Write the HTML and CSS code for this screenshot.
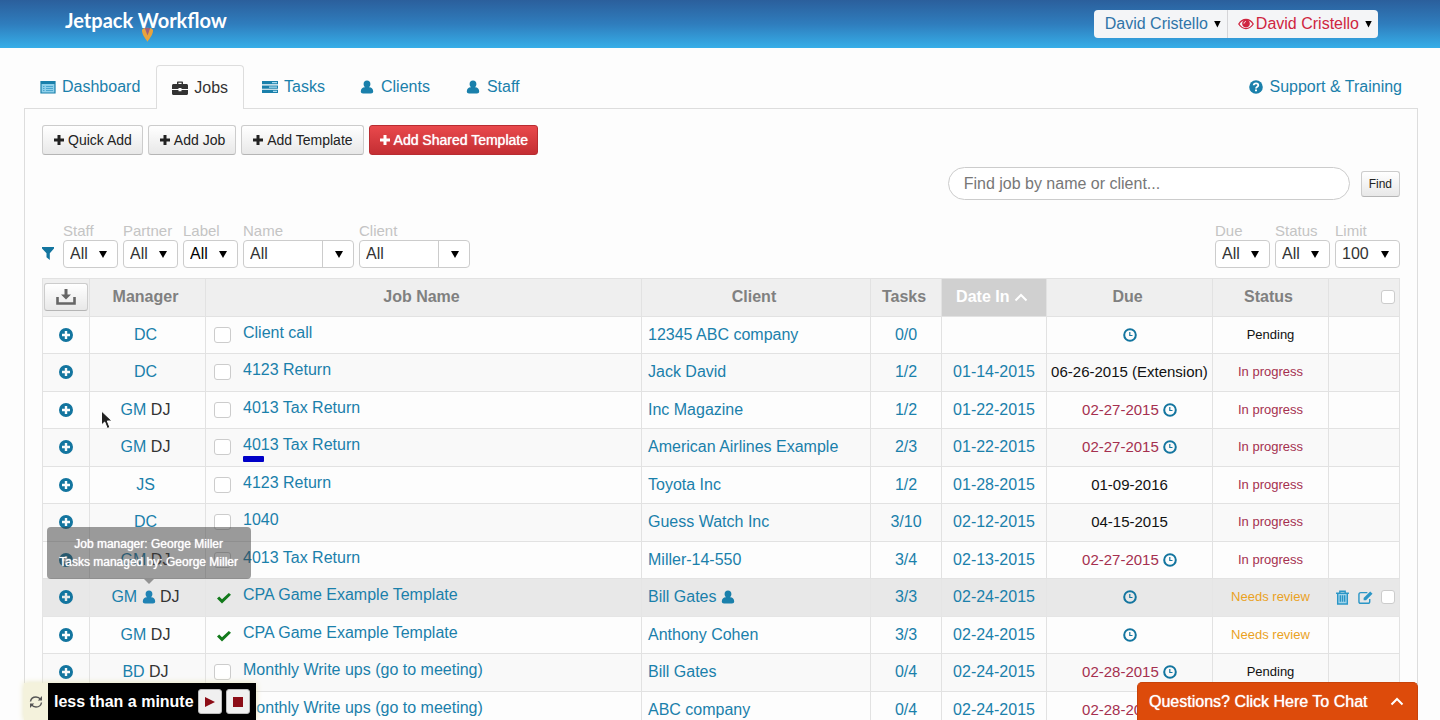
FILE: index.html
```html
<!DOCTYPE html>
<html lang="en">
<head>
<meta charset="utf-8">
<title>Jetpack Workflow – Jobs</title>
<link rel="stylesheet" href="styles.css">
</head>
<body>
<svg class="sprite" aria-hidden="true">
  <symbol id="i-plus" viewBox="0 0 12 12"><path d="M4.500 1h3v3.500H11v3H7.500V11h-3V7.500H1v-3h3.500z"/></symbol>
  <symbol id="i-add" viewBox="0 0 14 14"><path fill-rule="evenodd" d="M7 0a7 7 0 1 0 0 14A7 7 0 0 0 7 0zM5.800 3h2.400v2.800H11v2.400H8.200V11H5.800V8.200H3V5.800h2.800z"/></symbol>
  <symbol id="i-clock" viewBox="0 0 14 14"><circle cx="7" cy="7" r="5.800" fill="none" stroke="currentColor" stroke-width="2"/><path d="M6.800 4v3.500h2.700" fill="none" stroke="currentColor" stroke-width="1.200"/></symbol>
  <symbol id="i-user" viewBox="0 0 14 14"><path d="M7 .5C4.800.5 3.600 2 3.600 4c0 1.400.5 2.500 1.300 3.200C2.300 7.200.8 8.800.8 11.500c0 1.300.9 2 2.200 2h8c1.300 0 2.200-.7 2.200-2 0-2.700-1.500-4.300-4.100-4.300.8-.7 1.300-1.800 1.300-3.200C10.400 2 9.200.5 7 .5z"/></symbol>
  <symbol id="i-check" viewBox="0 0 14 12"><path d="M0 6.500 2.200 4.500 5 7.300 11.800 1 14 2.800 5 11.500z"/></symbol>
</svg>
<div class="app">
  <header class="topbar">
    <a class="brand" href="#">Jetpack Workflow
      <svg class="flame" viewBox="0 0 12 16"><path fill="#e9a33c" d="M0 3c1-3 11-3 12 0 .2 5-3 8-6 13C3 11-.2 8 0 3z"/><path fill="#a0607a" d="M3 1h6L6 9z"/></svg>
    </a>
    <div class="accounts">
      <button class="account" type="button">David Cristello <span class="caret"></span></button>
      <button class="account viewing" type="button"><svg class="eye" viewBox="0 0 16 12"><path fill="none" stroke="currentColor" stroke-width="1.300" d="M.8 6C2.500 3.200 5 1.500 8 1.500S13.500 3.200 15.200 6C13.500 8.800 11 10.500 8 10.500S2.500 8.800.8 6z"/><circle cx="8" cy="5.500" r="3.800"/><path fill="none" stroke="#fff" stroke-width=".9" d="M6 5.600c0-1.200.8-2 2-2"/></svg>David Cristello <span class="caret"></span></button>
    </div>
  </header>

  <main class="page">
    <nav class="tabs">
      <a class="tab" href="#"><svg class="icon16" viewBox="0 0 16 14"><path fill="#8fd0ea" d="M1 2h14v11H1z"/><path fill="none" stroke="currentColor" stroke-width="1.200" d="M1 1.500h14v11.500H1z"/><path fill="currentColor" d="M1 1h14v3H1z"/><path stroke="#4ba6cf" stroke-width="1" d="M3 6.500h1.500M3 8.500h1.500M3 10.500h1.500M6 6.500h7M6 8.500h7M6 10.500h7"/></svg>Dashboard</a>
      <a class="tab active" href="#"><svg class="icon16" viewBox="0 0 16 14"><path fill-rule="evenodd" d="M5 3V1.500C5 .9 5.400.5 6 .5h4c.6 0 1 .4 1 1V3h3.500c.9 0 1.500.6 1.500 1.500V8H9.500V7h-3v1H0V4.500C0 3.600.6 3 1.500 3zm1.400 0h3.200V1.800H6.400zM0 9h6.500v1.200h3V9H16v3.500c0 .9-.6 1.500-1.500 1.500h-13C.6 14 0 13.400 0 12.500z"/></svg>Jobs</a>
      <a class="tab" href="#"><svg class="icon16" viewBox="0 0 16 14"><path d="M0 1h16v3.300H0zM0 5.400h16v3.300H0zM0 9.800h16V13H0z"/><path fill="#a5daf0" d="M10 2h5v1.300h-5zM7 6.400h8v1.300H7zM11 10.800h4V12h-4z"/></svg>Tasks</a>
      <a class="tab person" href="#"><svg class="icon14"><use href="#i-user"/></svg>Clients</a>
      <a class="tab person" href="#"><svg class="icon14"><use href="#i-user"/></svg>Staff</a>
      <a class="support" href="#"><svg class="icon14" viewBox="0 0 14 14"><circle cx="7" cy="7" r="6.800"/><path fill="none" stroke="#fff" stroke-width="1.800" d="M4.700 5.300C4.800 3.900 5.800 3.300 7 3.300s2.300.7 2.300 1.900C9.300 6.700 7 6.700 7 8.600"/><path fill="#fff" d="M6 9.500h2v1.800H6z"/></svg>Support &amp; Training</a>
    </nav>

    <section class="panel">
      <div class="actions">
        <button class="btn" type="button"><svg class="plus"><use href="#i-plus"/></svg>Quick Add</button>
        <button class="btn" type="button"><svg class="plus"><use href="#i-plus"/></svg>Add Job</button>
        <button class="btn" type="button"><svg class="plus"><use href="#i-plus"/></svg>Add Template</button>
        <button class="btn danger" type="button"><svg class="plus"><use href="#i-plus"/></svg>Add Shared Template</button>
      </div>

      <form class="search">
        <input class="search-box" type="search" placeholder="Find job by name or client..." aria-label="Find job by name or client">
        <button class="btn small" type="button">Find</button>
      </form>

      <div class="filters">
        <svg class="funnel" viewBox="0 0 12 13"><path d="M0 0h12v1.500L7.800 6.200V13L4.500 10.300V6.200L0 1.500z"/></svg>
        <div class="filter"><label for="f-staff">Staff</label><div class="pick"><select id="f-staff"><option>All</option></select></div></div>
        <div class="filter"><label for="f-partner">Partner</label><div class="pick"><select id="f-partner"><option>All</option></select></div></div>
        <div class="filter dark"><label for="f-label">Label</label><div class="pick"><select id="f-label"><option>All</option></select></div></div>
        <div class="filter wide"><label for="f-name">Name</label><div class="pick"><select id="f-name"><option>All</option></select></div></div>
        <div class="filter wide"><label for="f-client">Client</label><div class="pick"><select id="f-client"><option>All</option></select></div></div>
        <div class="filter push"><label for="f-due">Due</label><div class="pick"><select id="f-due"><option>All</option></select></div></div>
        <div class="filter"><label for="f-status">Status</label><div class="pick"><select id="f-status"><option>All</option></select></div></div>
        <div class="filter limit"><label for="f-limit">Limit</label><div class="pick"><select id="f-limit"><option>100</option></select></div></div>
      </div>

      <table class="jobs">
        <colgroup><col class="c-add"><col class="c-manager"><col><col class="c-client"><col class="c-tasks"><col class="c-in"><col class="c-due"><col class="c-status"><col class="c-tools"></colgroup>
        <thead>
          <tr>
            <th><button class="btn export" type="button" aria-label="Export"><svg viewBox="0 0 20 16"><path d="M8.500 0h3v5.500H15L10 10.500 5 5.500h3.500z"/><path fill="none" stroke="currentColor" stroke-width="2.600" d="M1.500 8v6.500h17V8"/></svg></button></th>
            <th>Manager</th><th>Job Name</th><th>Client</th><th>Tasks</th>
            <th class="sorted">Date In <svg class="chevron" viewBox="0 0 14 9"><path d="M1.500 7.500 7 2l5.500 5.500"/></svg></th>
            <th>Due</th><th>Status</th>
            <th class="tools"><input type="checkbox" aria-label="Select all"></th>
          </tr>
        </thead>
        <tbody>
          <tr><td><svg class="icon14"><use href="#i-add"/></svg></td><td><a href="#">DC</a></td><td class="name"><div class="job"><input type="checkbox" aria-label="Done"><a href="#">Client call</a></div></td><td class="client"><a href="#">12345 ABC company</a></td><td><a href="#">0/0</a></td><td></td><td class="due"><svg class="icon14"><use href="#i-clock"/></svg></td><td class="status">Pending</td><td></td></tr>
          <tr><td><svg class="icon14"><use href="#i-add"/></svg></td><td><a href="#">DC</a></td><td class="name"><div class="job"><input type="checkbox" aria-label="Done"><a href="#">4123 Return</a></div></td><td class="client"><a href="#">Jack David</a></td><td><a href="#">1/2</a></td><td><a href="#">01-14-2015</a></td><td class="due">06-26-2015 (Extension)</td><td class="status progress">In progress</td><td></td></tr>
          <tr><td><svg class="icon14"><use href="#i-add"/></svg></td><td class="has-cursor"><a href="#">GM</a> DJ<svg class="cursor" viewBox="0 0 13 20"><path d="M1.500 1v14l3.200-3 2.600 6.500 2.600-1.100L7.300 11H12z"/></svg></td><td class="name"><div class="job"><input type="checkbox" aria-label="Done"><a href="#">4013 Tax Return</a></div></td><td class="client"><a href="#">Inc Magazine</a></td><td><a href="#">1/2</a></td><td><a href="#">01-22-2015</a></td><td class="due late">02-27-2015 <svg class="icon14"><use href="#i-clock"/></svg></td><td class="status progress">In progress</td><td></td></tr>
          <tr><td><svg class="icon14"><use href="#i-add"/></svg></td><td><a href="#">GM</a> DJ</td><td class="name"><div class="job"><input type="checkbox" aria-label="Done"><div><a href="#">4013 Tax Return</a><span class="tag"></span></div></div></td><td class="client"><a href="#">American Airlines Example</a></td><td><a href="#">2/3</a></td><td><a href="#">01-22-2015</a></td><td class="due late">02-27-2015 <svg class="icon14"><use href="#i-clock"/></svg></td><td class="status progress">In progress</td><td></td></tr>
          <tr><td><svg class="icon14"><use href="#i-add"/></svg></td><td><a href="#">JS</a></td><td class="name"><div class="job"><input type="checkbox" aria-label="Done"><a href="#">4123 Return</a></div></td><td class="client"><a href="#">Toyota Inc</a></td><td><a href="#">1/2</a></td><td><a href="#">01-28-2015</a></td><td class="due">01-09-2016</td><td class="status progress">In progress</td><td></td></tr>
          <tr><td><svg class="icon14"><use href="#i-add"/></svg></td><td><a href="#">DC</a></td><td class="name"><div class="job"><input type="checkbox" aria-label="Done"><a href="#">1040</a></div></td><td class="client"><a href="#">Guess Watch Inc</a></td><td><a href="#">3/10</a></td><td><a href="#">02-12-2015</a></td><td class="due">04-15-2015</td><td class="status progress">In progress</td><td></td></tr>
          <tr><td><svg class="icon14"><use href="#i-add"/></svg></td><td><a href="#">GM</a> DJ</td><td class="name"><div class="job"><input type="checkbox" aria-label="Done"><a href="#">4013 Tax Return</a></div></td><td class="client"><a href="#">Miller-14-550</a></td><td><a href="#">3/4</a></td><td><a href="#">02-13-2015</a></td><td class="due late">02-27-2015 <svg class="icon14"><use href="#i-clock"/></svg></td><td class="status progress">In progress</td><td></td></tr>
          <tr class="hover"><td><svg class="icon14"><use href="#i-add"/></svg></td><td><a href="#">GM</a> <span class="tip-anchor"><svg class="icon14"><use href="#i-user"/></svg><span class="tooltip" role="tooltip">Job manager: George Miller<br>Tasks managed by: George Miller</span></span> DJ</td><td class="name"><div class="job"><svg class="done"><use href="#i-check"/></svg><a href="#">CPA Game Example Template</a></div></td><td class="client"><a href="#">Bill Gates <svg class="icon14"><use href="#i-user"/></svg></a></td><td><a href="#">3/3</a></td><td><a href="#">02-24-2015</a></td><td class="due"><svg class="icon14"><use href="#i-clock"/></svg></td><td class="status review">Needs review</td>
            <td class="tools"><div class="toolset">
              <button type="button" aria-label="Delete"><svg viewBox="0 0 14 14"><path fill="#9fd3ea" stroke="currentColor" stroke-width="1.300" d="M2.500 3v10h9V3"/><path fill="none" stroke="currentColor" stroke-width="1.300" d="M1 3h12M4.500 3V1.200h5V3M5 5v6M7 5v6M9 5v6"/></svg></button>
              <button type="button" aria-label="Edit"><svg viewBox="0 0 16 14"><path fill="none" stroke="currentColor" stroke-width="1.500" d="M10 1.800H3C1.800 1.800 1 2.600 1 3.800v7.400c0 1.200.8 2 2 2h7.500c1.200 0 2-.8 2-2V8.500"/><path d="M6 7.500 13 .5l2.500 2.500-7 7H6z"/></svg></button>
              <input type="checkbox" aria-label="Select job"></div></td></tr>
          <tr><td><svg class="icon14"><use href="#i-add"/></svg></td><td><a href="#">GM</a> DJ</td><td class="name"><div class="job"><svg class="done"><use href="#i-check"/></svg><a href="#">CPA Game Example Template</a></div></td><td class="client"><a href="#">Anthony Cohen</a></td><td><a href="#">3/3</a></td><td><a href="#">02-24-2015</a></td><td class="due"><svg class="icon14"><use href="#i-clock"/></svg></td><td class="status review">Needs review</td><td></td></tr>
          <tr><td><svg class="icon14"><use href="#i-add"/></svg></td><td><a href="#">BD</a> DJ</td><td class="name"><div class="job"><input type="checkbox" aria-label="Done"><a href="#">Monthly Write ups (go to meeting)</a></div></td><td class="client"><a href="#">Bill Gates</a></td><td><a href="#">0/4</a></td><td><a href="#">02-24-2015</a></td><td class="due late">02-28-2015 <svg class="icon14"><use href="#i-clock"/></svg></td><td class="status">Pending</td><td></td></tr>
          <tr><td></td><td></td><td class="name"><div class="job"><input type="checkbox" aria-label="Done"><a href="#">Monthly Write ups (go to meeting)</a></div></td><td class="client"><a href="#">ABC company</a></td><td><a href="#">0/4</a></td><td><a href="#">02-24-2015</a></td><td class="due late">02-28-2015 <svg class="icon14"><use href="#i-clock"/></svg></td><td></td><td></td></tr>
        </tbody>
      </table>
    </section>
  </main>

  <div class="recorder">
    <svg class="refresh" viewBox="0 0 14 14"><path fill="none" stroke="currentColor" stroke-width="1.400" d="M1.500 6.500C2 3.500 4.300 2 7 2c2 0 3.500.8 4.600 2.300M12.500 7.500C12 10.500 9.700 12 7 12c-2 0-3.500-.8-4.600-2.300"/><path d="M13 1v4.500H8.800zM1 13V8.500h4.200z"/></svg>
    <div class="recorder-bar">
      <span>less than a minute</span>
      <button type="button" aria-label="Resume"><svg viewBox="0 0 12 12"><path d="M1 1l10 5-10 5z"/></svg></button>
      <button type="button" aria-label="Stop"><svg viewBox="0 0 12 12"><path d="M1 1h10v10H1z"/></svg></button>
    </div>
  </div>
  <button class="chat" type="button">Questions? Click Here To Chat <svg class="chevron" viewBox="0 0 14 9"><path d="M1.500 7.500 7 2l5.500 5.500"/></svg></button>
</div>
</body>
</html>
```
FILE: styles.css
```css
* { box-sizing: border-box; }

body {
  margin: 0;
  background: #fdfdfd;
  color: #333;
  font: 16px/20px "Liberation Sans", Arial, sans-serif;
}

a { color: #1a80ab; text-decoration: none; }
button, input, select { font: inherit; color: inherit; margin: 0; }
button { cursor: pointer; }
svg { fill: currentColor; }

.sprite { position: absolute; width: 0; height: 0; }
.app { height: 100vh; overflow: hidden; }

.icon14 { width: 14px; height: 14px; vertical-align: -2px; }
.icon16 { width: 16px; height: 14px; }
td > .icon14 { color: #13759f; }

/* Top bar */
.topbar {
  display: flex;
  justify-content: space-between;
  align-items: center;
  height: 48px;
  padding: 0 62px 0 65px;
  background: linear-gradient(#2b5f9c, #2f7dbd 50%, #36aee8);
}
.brand {
  position: relative;
  padding-bottom: 8px;
  color: #fff;
  font: 700 20px/24px Lato, sans-serif;
}
.flame { position: absolute; left: 77px; top: 19px; width: 11px; height: 15px; }
.accounts {
  display: flex;
  border-radius: 4px;
  background: #f4f5f7;
  overflow: hidden;
}
.account {
  display: flex;
  align-items: center;
  height: 28px;
  padding: 0 6px 0 11px;
  border: 0;
  background: none;
  color: #2f74a8;
}
.account + .account { padding-left: 10px; border-left: 1px solid #d5d5d8; }
.account.viewing { color: #cf2540; }
.eye { width: 16px; height: 12px; margin-right: 2px; }
.caret {
  width: 7px;
  height: 7px;
  margin-left: 6px;
  background: #000;
  clip-path: polygon(0 0, 100% 0, 50% 100%);
}

/* Tabs */
.page { padding: 17px 22px 0 24px; }
.tabs { display: flex; align-items: flex-end; }
.tab, .support { display: flex; align-items: center; gap: 6px; }
.tab {
  height: 43px;
  padding: 0 15px;
  border: 1px solid transparent;
  border-bottom: 0;
  border-radius: 4px 4px 0 0;
}
.tab + .tab { margin-right: 2px; }
.tab.person { padding: 0 16px; gap: 7px; }
.tab.active {
  z-index: 1;
  margin-bottom: -1px;
  height: 44px;
  border-color: #ddd;
  background: #fdfdfd;
  color: #333;
}
.support { height: 43px; margin-left: auto; margin-right: 16px; }

/* Panel */
.panel {
  padding: 16px 17px 0;
  border: 1px solid #ddd;
}
.actions { display: flex; gap: 5px; }
.btn {
  display: flex;
  align-items: center;
  justify-content: center;
  gap: 3px;
  height: 30px;
  padding: 0 10px;
  border: 1px solid #ccc;
  border-bottom-color: #b5b5b5;
  border-radius: 3px;
  background: linear-gradient(#fff, #e8e8e8);
  color: #222;
  font-size: 14px;
}
.btn.danger {
  padding: 0 9px;
  border-color: #b82c31;
  background: linear-gradient(#e9494c, #c42e33);
  color: #fff;
  text-shadow: 0 0 1px #fff;
}
.plus { width: 12px; height: 12px; }

.search {
  display: flex;
  justify-content: flex-end;
  align-items: center;
  gap: 11px;
  margin-top: 12px;
}
.search-box {
  width: 402px;
  height: 33px;
  padding: 0 15px;
  border: 1px solid #ccc;
  border-radius: 17px;
  background: #fff;
}
.search-box::placeholder { color: #777; opacity: 1; }
.btn.small { height: 26px; padding: 0 7px; font-size: 12px; }

/* Filters */
.filters { display: flex; align-items: flex-end; gap: 5px; margin-top: 22px; }
.funnel { width: 12px; height: 13px; margin: 0 4px 8px 0; color: #13759f; }
.filter { width: 55px; color: #333; }
.filter label { display: block; color: #c4c4c4; font-size: 15px; line-height: 18px; }
.filter.dark { color: #000; }
.filter.wide { width: 111px; }
.filter.limit { width: 65px; }
.filter.push { margin-left: auto; }
.pick { position: relative; }
.pick select {
  display: block;
  width: 100%;
  height: 28px;
  padding: 0 0 0 6px;
  border: 1px solid #ccc;
  border-radius: 4px;
  background: #fff;
  appearance: none;
}
.pick::after {
  content: "";
  position: absolute;
  right: 11px;
  top: 11px;
  width: 8px;
  height: 7px;
  background: #000;
  clip-path: polygon(0 0, 100% 0, 50% 100%);
  pointer-events: none;
}
.wide .pick::before {
  content: "";
  position: absolute;
  right: 31px;
  top: 1px;
  bottom: 1px;
  border-left: 1px solid #ccc;
}

/* Jobs table */
.jobs {
  width: 100%;
  margin-top: 10px;
  border-collapse: collapse;
  table-layout: fixed;
}
.c-add { width: 47px; }
.c-manager, .c-status { width: 116px; }
.c-client { width: 229px; }
.c-tasks, .c-tools { width: 71px; }
.c-in { width: 105px; }
.c-due { width: 166px; }

.jobs th, .jobs td {
  padding: 0 0 1px;
  border: 1px solid #e2e2e2;
  text-align: center;
  white-space: nowrap;
}
.jobs th { height: 38px; background: #efefef; color: #808080; }
.jobs th + th { padding-right: 4px; }
.jobs td:nth-child(2) { padding-right: 4px; }
.jobs th.sorted { background: #d0d0d0; color: #fff; }
.jobs td { height: 37px; }
.jobs tr:nth-child(even) td { height: 38px; background: #f9f9f9; }
.jobs tbody tr.hover td { background: #e8e8e8; border-color: #e5e5e5; }
.jobs .client { padding-left: 6px; text-align: left; }
.jobs .due { color: #111; font-size: 15px; }
.jobs .late { color: #a5304f; }
.jobs .status { color: #111; font-size: 13px; }
.jobs .progress { color: #a5304f; }
.jobs .review { color: #eaa21f; }
.chevron {
  width: 14px;
  height: 9px;
  fill: none;
  stroke: currentColor;
  stroke-width: 2;
}
.btn.export { width: 44px; height: 28px; margin: 0 auto; padding: 0; color: #666; }
.export svg { width: 20px; height: 16px; }

.jobs .name { vertical-align: top; text-align: left; }
.job { display: flex; align-items: flex-start; gap: 12px; padding: 6px 0 0 8px; }
.job input { margin-top: 4px; }
.done { width: 14px; height: 12px; margin: 7px 0 0 3px; color: #127a1b; }
.jobs input[type="checkbox"] {
  appearance: none;
  width: 17px;
  height: 16px;
  border: 1px solid #ccc;
  border-radius: 3px;
  background: #fff;
}
.tag { display: block; width: 21px; height: 6px; margin-top: 1px; border-radius: 1px; background: #0000c8; }

.jobs .tools { padding-right: 4px; text-align: right; }
.jobs .tools input { width: 14px; height: 14px; vertical-align: -2px; }
.toolset { display: flex; justify-content: flex-end; align-items: center; gap: 8px; }
.toolset button { padding: 0; border: 0; background: none; color: #2b96c6; line-height: 0; }
.toolset svg { width: 15px; height: 15px; }

.has-cursor { position: relative; }
.cursor { position: absolute; left: 10px; top: 18px; width: 13px; height: 20px; fill: #222; stroke: #fff; }

.tip-anchor { position: relative; color: #2083b4; }
.tooltip {
  position: absolute;
  bottom: 26px;
  left: 50%;
  width: 204px;
  padding: 8px 0;
  border-radius: 4px;
  background: rgba(60, 60, 60, 0.5);
  color: #fff;
  font-size: 12px;
  line-height: 18px;
  text-shadow: 0 0 1px #fff;
  transform: translateX(-50%);
}
.tooltip::after {
  content: "";
  position: absolute;
  top: 100%;
  left: 50%;
  margin-left: -5px;
  border: 5px solid transparent;
  border-top-color: rgba(60, 60, 60, 0.5);
  border-bottom: 0;
}

/* Bottom overlays */
.recorder {
  position: fixed;
  left: 24px;
  bottom: 0;
  display: flex;
  align-items: center;
  gap: 5px;
  padding-left: 5px;
  background: #f4f2dc;
  box-shadow: 0 0 6px #e6e3b8;
}
.refresh { width: 14px; height: 14px; color: #555; }
.recorder-bar {
  display: flex;
  align-items: center;
  gap: 4px;
  height: 37px;
  padding: 0 6px;
  background: #000;
  color: #fff;
  font-weight: 700;
}
.recorder-bar button {
  display: flex;
  align-items: center;
  justify-content: center;
  width: 24px;
  height: 25px;
  padding: 0;
  border: 1px solid #bbb;
  border-radius: 3px;
  background: #f0f0f0;
  color: #8c0d17;
}
.recorder-bar svg { width: 12px; height: 12px; }
.chat {
  position: fixed;
  right: 22px;
  bottom: 0;
  display: flex;
  align-items: center;
  justify-content: space-between;
  width: 281px;
  height: 38px;
  padding: 0 13px 0 11px;
  border: 1px solid #c8430a;
  border-bottom: 0;
  border-radius: 5px 5px 0 0;
  background: #dd4b0b;
  color: #fff;
  text-shadow: 0 0 1px #fff;
}
```
